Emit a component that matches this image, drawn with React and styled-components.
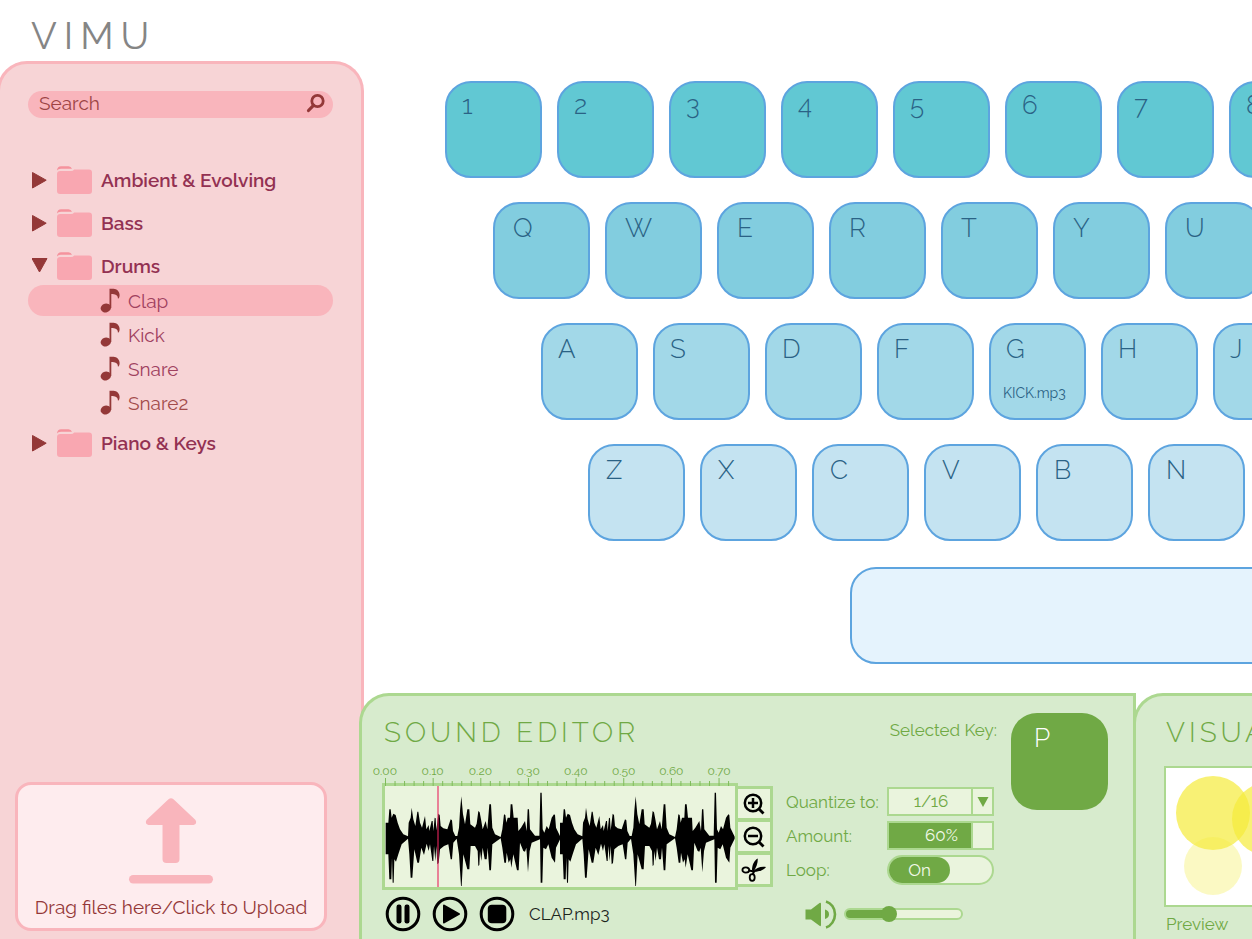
import React from 'react';
import styled, { createGlobalStyle, css } from 'styled-components';

const color = {
  pink: '#f7d4d6',
  pinkEdge: '#f9b5bc',
  maroon: '#943838',
  plum: '#933152',
  green: '#d7ebcd',
  greenEdge: '#acd890',
  leaf: '#70a945',
  cream: '#eaf4dd',
  keyEdge: '#5da4df',
  keyText: '#2a6285',
};

const GlobalStyle = createGlobalStyle`
  *, *::before, *::after { box-sizing: border-box; }
  body {
    margin: 0;
    background: #fff;
    font-family: Raleway, Lato, "Open Sans", sans-serif;
    font-size: 19px;
  }
  button, input, select { font: inherit; color: inherit; margin: 0; }
  ul { list-style: none; margin: 0; padding: 0; }
  svg { display: block; flex: none; }
`;

const Page = styled.div`
  min-height: 100vh;
  display: flex;
  flex-direction: column;
  overflow: hidden;
`;

const Logo = styled.h1`
  margin: 0;
  height: 61px;
  padding: 12px 0 0 31px;
  font-size: 38px;
  line-height: 48px;
  font-weight: 400;
  letter-spacing: 7px;
  color: #858585;
`;

const Body = styled.div`
  flex: 1;
  display: flex;
`;

const Sidebar = styled.aside`
  flex: none;
  width: 367px;
  margin-left: -3px;
  padding: 27px 28px 8px 28px;
  display: flex;
  flex-direction: column;
  background: ${color.pink};
  border: 3px solid ${color.pinkEdge};
  border-bottom: 0;
  border-radius: 30px 30px 0 0;
`;

const SearchBox = styled.label`
  width: 305px;
  height: 27px;
  padding: 0 8px 3px 11px;
  display: flex;
  align-items: center;
  background: ${color.pinkEdge};
  border-radius: 14px;
  color: ${color.maroon};
`;

const SearchInput = styled.input`
  flex: 1;
  min-width: 0;
  padding: 0;
  border: 0;
  outline: 0;
  background: none;
  line-height: 24px;
  &::placeholder { color: ${color.maroon}; opacity: 0.9; }
`;

const Tree = styled.ul`
  width: 305px;
  margin-top: 46px;
`;

const Branch = styled.li`
  margin-bottom: ${(p) => (p.$open ? 9 : 11)}px;
`;

const FolderButton = styled.button`
  height: 32px;
  width: 100%;
  padding: 0 0 0 4px;
  display: flex;
  align-items: center;
  gap: 9px;
  border: 0;
  background: none;
  color: ${color.plum};
  font-weight: 600;
  text-align: left;
`;

const Files = styled.ul`
  margin-top: 3px;
  display: flex;
  flex-direction: column;
  gap: 3px;
`;

const FileButton = styled.button`
  width: 100%;
  height: 31px;
  padding: 0 0 0 72px;
  display: flex;
  align-items: center;
  gap: 8px;
  border: 0;
  border-radius: 16px;
  background: ${(p) => (p.$selected ? color.pinkEdge : 'none')};
  color: ${(p) => (p.$tone === 'red' ? '#a34b4b' : '#a0415f')};
`;

const Upload = styled.label`
  width: 312px;
  height: 149px;
  margin: auto 0 0 -13px;
  padding-top: 12px;
  display: flex;
  flex-direction: column;
  align-items: center;
  justify-content: space-between;
  padding-bottom: 9px;
  background: #feecee;
  border: 3px solid ${color.pinkEdge};
  border-radius: 16px;
  color: ${color.maroon};
  line-height: 24px;
`;

const HiddenInput = styled.input`
  position: absolute;
  width: 1px;
  height: 1px;
  opacity: 0;
`;

const Workspace = styled.main`
  flex: 1;
  min-width: 0;
  display: flex;
  flex-direction: column;
`;

const Keyboard = styled.section`
  padding: 20px 0 29px 81px;
  display: flex;
  flex-direction: column;
  gap: 24px;
`;

const KeyRow = styled.div`
  display: flex;
  gap: 15px;
  margin-left: ${(p) => p.$indent}px;
`;

const keyShape = css`
  flex: none;
  width: 97px;
  height: 97px;
  border-radius: 26px;
  line-height: 30px;
  font-size: 26px;
  font-weight: 300;
`;

const Key = styled.button`
  ${keyShape}
  padding: ${(p) => p.$top}px 0 15px ${(p) => p.$inset}px;
  display: flex;
  flex-direction: column;
  justify-content: space-between;
  align-items: flex-start;
  border: 2px solid ${color.keyEdge};
  background: ${(p) => p.$fill};
  color: ${color.keyText};
`;

const KeySample = styled.span`
  margin-left: -3px;
  font-size: 14px;
  line-height: 20px;
  font-weight: 400;
`;

const SpaceKey = styled.button`
  flex: none;
  width: 560px;
  height: 97px;
  margin: 2px 0 0 405px;
  border: 2px solid ${color.keyEdge};
  border-radius: 26px;
  background: #e5f3fd;
`;

const Studio = styled.div`
  flex: 1;
  display: flex;
  margin-left: -5px;
`;

const panel = css`
  border: 3px solid ${color.greenEdge};
  border-bottom: 0;
  background: ${color.green};
  color: ${color.leaf};
`;

const Editor = styled.section`
  ${panel}
  flex: none;
  position: relative;
  z-index: 1;
  width: 777px;
  padding: 17px 25px 4px 20px;
  display: flex;
  border-radius: 30px 0 0 0;
`;

const PanelTitle = styled.h2`
  margin: 0;
  padding-left: 2px;
  font-size: 28px;
  line-height: 40px;
  font-weight: 300;
  letter-spacing: 4px;
  white-space: nowrap;
`;

const WaveColumn = styled.div`
  flex: none;
  width: 391px;
`;

const RulerLabels = styled.div`
  display: grid;
  grid-template-columns: repeat(8, 1fr);
  width: 382px;
  margin: 11px 0 0 -21px;
  font-size: 12px;
  line-height: 14px;
  text-align: center;
`;

const Ticks = styled.svg`
  position: relative;
  margin: 0 0 -3px 3px;
`;

const WaveRow = styled.div`
  display: flex;
  align-items: center;
`;

const WaveBox = styled.div`
  width: 356px;
  height: 107px;
  border: 3px solid ${color.greenEdge};
  background: ${color.cream};
`;

const Tools = styled.div`
  flex: 1;
  height: 101px;
  display: flex;
  flex-direction: column;
  gap: 4px;
  padding: 3px 3px 3px 0;
  background: ${color.greenEdge};
`;

const ToolButton = styled.button`
  flex: 1;
  padding: 0;
  display: grid;
  place-items: center;
  border: 0;
  background: ${color.cream};
  color: #000;
`;

const Transport = styled.div`
  margin-top: 6px;
  padding-left: 3px;
  display: flex;
  align-items: center;
  gap: 11px;
  color: #1c241c;
`;

const RoundButton = styled.button`
  width: 36px;
  height: 36px;
  padding: 0;
  border: 0;
  background: none;
`;

const TrackName = styled.span`
  margin-left: 3px;
  font-size: 17px;
`;

const Controls = styled.div`
  flex: none;
  width: 211px;
  margin: 0 14px 0 13px;
`;

const SelectedLabel = styled.div`
  margin-bottom: 40px;
  line-height: 34px;
  font-size: 17px;
  text-align: right;
`;

const Field = styled.div`
  display: grid;
  grid-template-columns: 101px 107px;
  height: 29px;
  margin-bottom: 5px;
  align-items: center;
  font-size: 17px;
`;

const Box = styled.div`
  position: relative;
  height: 29px;
  display: flex;
  border: 2px solid ${color.greenEdge};
  background: ${color.cream};
`;

const Quantize = styled.select`
  appearance: none;
  width: 100%;
  border: 0;
  outline: 0;
  padding: 0 19px 2px 0;
  background: none;
  text-align: center;
  text-align-last: center;
`;

const SelectArrow = styled.span`
  position: absolute;
  right: 0;
  top: 0;
  bottom: 0;
  width: 21px;
  display: grid;
  place-items: center;
  border-left: 2px solid ${color.greenEdge};
  pointer-events: none;
`;

const Amount = styled.input`
  appearance: none;
  width: 100%;
  height: 25px;
  background: linear-gradient(
    to right,
    ${color.leaf} 82px,
    ${color.greenEdge} 82px 84px,
    ${color.cream} 84px
  );
  &::-webkit-slider-thumb { appearance: none; width: 1px; height: 25px; }
`;

const AmountValue = styled.output`
  position: absolute;
  inset: 0;
  padding-left: 2px;
  line-height: 24px;
  text-align: center;
  color: #f2f9ea;
  pointer-events: none;
`;

const Toggle = styled.label`
  height: 30px;
  display: flex;
  border: 2px solid ${color.greenEdge};
  border-radius: 15px;
  background: ${color.cream};
`;

const ToggleKnob = styled.span`
  width: 61px;
  border-radius: 13px;
  background: ${color.leaf};
  color: #f2f9ea;
  line-height: 26px;
  text-align: center;
`;

const Volume = styled.label`
  margin-top: 15px;
  padding-left: 19px;
  height: 30px;
  display: flex;
  align-items: center;
  gap: 7px;
`;

const VolumeSlider = styled.input`
  appearance: none;
  width: 119px;
  height: 12px;
  border: 2px solid ${color.greenEdge};
  border-radius: 6px;
  background: linear-gradient(to right, ${color.leaf} 38%, ${color.cream} 38%);
  &::-webkit-slider-thumb {
    appearance: none;
    width: 16px;
    height: 16px;
    border-radius: 8px;
    background: ${color.leaf};
  }
`;

const SelectedKey = styled.button`
  ${keyShape}
  padding: 10px 0 0 23px;
  display: flex;
  align-items: flex-start;
  border: 0;
  background: ${color.leaf};
  color: #fff;
`;

const Visualizer = styled.section`
  ${panel}
  flex: 1 0 420px;
  margin-left: -3px;
  padding: 17px 28px 0 28px;
  border-radius: 30px 0 0 0;
`;

const Preview = styled.figure`
  margin: 13px 0 0;
`;

const Screen = styled.div`
  height: 141px;
  border: 2px solid ${color.greenEdge};
  background: #fff;
`;

const Caption = styled.figcaption`
  padding: 5px 0 0 2px;
  line-height: 24px;
  font-size: 17px;
`;

function Arrow({ open }) {
  return (
    <svg width="16" height="18" viewBox="0 0 16 18" fill={color.maroon} stroke={color.maroon} strokeWidth="1" strokeLinejoin="round">
      {open ? <path d="M0 1.500h15L7.500 15Z" /> : <path d="M.5 1.500v15.500L14.200 9.200Z" />}
    </svg>
  );
}

function FolderIcon() {
  return (
    <svg width="35" height="29" viewBox="0 0 35 29">
      <path d="M0 4.500Q.5.300 4 .3h7.500Q14 .3 15 2.800H4Q1 2.800 0 4.500Z" fill="#f5929d" />
      <path d="M3.500 5H14q2 0 3.200-1.600H32q3 0 3 3V25q0 3-3 3H3q-3 0-3-3V8q0-3 3.500-3Z" fill="#f9a7b1" />
    </svg>
  );
}

function NoteIcon() {
  return (
    <svg width="20" height="25" viewBox="0 0 20 25" fill={color.maroon}>
      <ellipse cx="5.800" cy="20" rx="5.200" ry="4.400" transform="rotate(-15 5.800 20)" />
      <path d="M9.500 20V.8h1.600C15 .5 18.500 1.500 19.500 6c.3 2-.2 3.500-1 4.500h-.6C18 7 15 6.200 11.300 6V20Z" />
    </svg>
  );
}

function UploadIcon() {
  return (
    <svg width="86" height="90" viewBox="0 0 86 90" fill={color.pinkEdge}>
      <path d="M40.500 2.300q2.500-2 5 0L67.500 23q2 4-2 5H51.500V62q0 4-4 4h-9q-4 0-4-4V28H20.500q-4-1-2-5Z" />
      <rect x="1" y="78" width="84" height="8.500" rx="4.200" />
    </svg>
  );
}

// One pass of the loop as [x, amplitude] pairs, in thirds of a pixel.
const upper = [
  [0, 45], [8, 45], [11, 85], [15, 85], [18, 60], [23, 72], [30, 68], [36, 45], [43, 25], [53, 10], [67, 4],
  [69, 45], [75, 60], [78, 90], [83, 55], [89, 35], [95, 78], [98, 78], [103, 45], [109, 30], [118, 65], [122, 25],
  [129, 38], [131, 20], [138, 50], [141, 50], [143, 20], [147, 60], [150, 58], [152, 22], [158, 72], [162, 68], [165, 35], [173, 28],
  [185, 25], [195, 55], [199, 52], [202, 20], [209, 5], [215, 5], [220, 30], [223, 80], [227, 124], [232, 70],
  [238, 40], [245, 85], [251, 85], [254, 40], [268, 30], [273, 42], [278, 80], [282, 76], [286, 55], [291, 25], [300, 50],
  [305, 25], [311, 100], [316, 100], [320, 30], [328, 10], [345, 2], [350, 25], [355, 70], [359, 68], [362, 45], [366, 60],
  [373, 60], [375, 100], [380, 100], [384, 60], [396, 60], [398, 20], [406, 30], [418, 50], [423, 20],
  [426, 85], [430, 85], [433, 25], [448, 6], [461, 6], [464, 135], [468, 135], [471, 25], [476, 15], [483, 35], [489, 25],
  [498, 60], [505, 70], [508, 68], [511, 30], [524, 3],
];
const lower = [
  [0, 50], [8, 50], [11, 125], [17, 125], [19, 60], [21, 135], [24, 135], [26, 65], [31, 72], [38, 50], [48, 20],
  [67, 3], [71, 50], [75, 120], [80, 120], [86, 35], [95, 75], [100, 75], [107, 30], [115, 52], [123, 18],
  [129, 40], [133, 20], [140, 70], [143, 70], [145, 25], [149, 70], [152, 25], [155, 80], [159, 76], [163, 35], [175, 25],
  [188, 20], [195, 65], [199, 65], [203, 15], [213, 3], [220, 50], [226, 145], [228, 145], [233, 50], [245, 95],
  [251, 95], [255, 25], [268, 25], [276, 40], [278, 85], [281, 82], [283, 40], [287, 70], [291, 30], [297, 65], [303, 65],
  [306, 30], [311, 98], [316, 98], [320, 20], [345, 2], [350, 30], [356, 75], [361, 75], [363, 45], [369, 75],
  [374, 65], [377, 90], [383, 50], [394, 98], [399, 98], [403, 15], [413, 40], [418, 42], [422, 30], [427, 104], [432, 40],
  [438, 15], [463, 5], [465, 135], [470, 135], [473, 30], [481, 35], [488, 20], [498, 60], [508, 75], [511, 30], [524, 3],
];
const wavePath =
  'M' + upper.map(([x, a]) => `${x} ${-a}`).join('L') + 'L' + [...lower].reverse().map(([x, a]) => `${x} ${a}`).join('L') + 'Z';

function Waveform() {
  return (
    <svg width="350" height="101" viewBox="0 0 1050 303" role="img" aria-label="Waveform">
      <path d={wavePath} transform="translate(2 155)" />
      <path d={wavePath} transform="translate(525 155)" />
      <rect x="156" y="0" width="6" height="303" fill="#e8245c" opacity="0.55" />
    </svg>
  );
}

function RulerTicks() {
  const ticks = Array.from({ length: 37 }, (_, i) => i);
  return (
    <Ticks width="352" height="8" viewBox="0 0 352 8" fill="#7fbb5a">
      {ticks.map((i) => (
        <rect key={i} x={i * 9.53} y={i % 5 ? 3 : 0} width="1" height={i % 5 ? 5 : 8} />
      ))}
    </Ticks>
  );
}

function SearchIcon() {
  return (
    <svg width="20" height="20" viewBox="0 0 20 20" fill="none" stroke={color.maroon}>
      <circle cx="12.500" cy="8" r="5.700" strokeWidth="2.800" />
      <path d="M8.500 12.300 3.500 17.500" strokeWidth="3.200" strokeLinecap="round" />
    </svg>
  );
}

function ZoomIcon({ plus }) {
  return (
    <svg width="24" height="24" viewBox="0 0 24 24" fill="none" stroke="#000" strokeWidth="2.500">
      <circle cx="11" cy="11" r="8.200" />
      <path d="M6 11h10" />
      {plus && <path d="M11 6v10" />}
      <path d="m17 17 4.500 4.500" strokeWidth="2.800" />
    </svg>
  );
}

function ScissorsIcon() {
  return (
    <svg width="26" height="26" viewBox="0 0 26 26">
      <path d="M11 13C11 8 13 3.500 16.800 1.500 17 6 15 11 12.500 15Z" />
      <path d="M12 14.500C15 11 20 9 25 10 22.500 13.500 17.500 14.500 12.500 15Z" />
      <path d="M8 13.500 13 14.500 11.500 18" fill="none" stroke="#000" strokeWidth="2" />
      <ellipse cx="4.800" cy="13" rx="3.400" ry="2.600" fill="none" stroke="#000" strokeWidth="1.800" />
      <ellipse cx="11.200" cy="20.500" rx="2.500" ry="3.300" fill="none" stroke="#000" strokeWidth="1.800" />
    </svg>
  );
}

function TransportIcon({ kind }) {
  return (
    <svg width="36" height="36" viewBox="0 0 36 36">
      <circle cx="18" cy="18" r="15.800" fill="none" stroke="#000" strokeWidth="3" />
      {kind === 'Pause' && (
        <>
          <rect x="11.500" y="8.500" width="5" height="19" rx="2.200" />
          <rect x="19.500" y="8.500" width="5" height="19" rx="2.200" />
        </>
      )}
      {kind === 'Play' && <path d="M12 9.500 27 18 12 26.500Z" stroke="#000" strokeWidth="2" strokeLinejoin="round" />}
      {kind === 'Stop' && <rect x="8.800" y="8.800" width="18.500" height="18.500" rx="4" />}
    </svg>
  );
}

function SpeakerIcon() {
  return (
    <svg width="32" height="30" viewBox="0 0 32 30" fill={color.leaf}>
      <path d="M.5 10.500H6L14.500 4q1.500-.8 1.500 1V26q0 1.800-1.500.8L6 20.500H.5Z" />
      <path d="M20 10.500q4 1 4 4.700t-4 4.700Z" />
      <path d="M22 2.500C27 4 31 9 31 15.200S27 27 22 28.500" fill="none" stroke={color.leaf} strokeWidth="2.600" transform="translate(-1 0)" />
    </svg>
  );
}

const folders = [
  { name: 'Ambient & Evolving' },
  { name: 'Bass' },
  {
    name: 'Drums',
    files: [{ name: 'Clap', selected: true }, { name: 'Kick' }, { name: 'Snare' }, { name: 'Snare2', tone: 'red' }],
  },
  { name: 'Piano & Keys' },
];

const keyRows = [
  { keys: '12345678', indent: 0, inset: 15, top: 7, fill: '#61c8d3' },
  { keys: 'QWERTYU', indent: 48, inset: 18, top: 9, fill: '#82cddf' },
  { keys: 'ASDFGHJ', indent: 96, inset: 15, top: 9, fill: '#a2d8e8' },
  { keys: 'ZXCVBN', indent: 143, inset: 16, top: 9, fill: '#c4e3f1' },
];

const samples = { G: 'KICK.mp3' };
const marks = ['0.00', '0.10', '0.20', '0.30', '0.40', '0.50', '0.60', '0.70'];

export default function App() {
  return (
    <Page>
      <GlobalStyle />
      <Logo>VIMU</Logo>
      <Body>
        <Sidebar>
          <SearchBox>
            <SearchInput type="text" placeholder="Search" aria-label="Search" />
            <SearchIcon />
          </SearchBox>
          <Tree>
            {folders.map((f) => (
              <Branch key={f.name} $open={!!f.files}>
                <FolderButton type="button" aria-expanded={!!f.files}>
                  <Arrow open={!!f.files} />
                  <FolderIcon />
                  {f.name}
                </FolderButton>
                {f.files && (
                  <Files>
                    {f.files.map((s) => (
                      <li key={s.name}>
                        <FileButton type="button" $selected={s.selected} $tone={s.tone}>
                          <NoteIcon />
                          {s.name}
                        </FileButton>
                      </li>
                    ))}
                  </Files>
                )}
              </Branch>
            ))}
          </Tree>
          <Upload>
            <HiddenInput type="file" />
            <UploadIcon />
            Drag files here/Click to Upload
          </Upload>
        </Sidebar>
        <Workspace>
          <Keyboard>
            {keyRows.map((row) => (
              <KeyRow key={row.keys} $indent={row.indent}>
                {[...row.keys].map((k) => (
                  <Key key={k} type="button" $fill={row.fill} $inset={row.inset} $top={row.top}>
                    {k}
                    {samples[k] && <KeySample>{samples[k]}</KeySample>}
                  </Key>
                ))}
              </KeyRow>
            ))}
            <SpaceKey type="button" aria-label="Space" />
          </Keyboard>
          <Studio>
            <Editor>
              <WaveColumn>
                <PanelTitle>SOUND EDITOR</PanelTitle>
                <RulerLabels>
                  {marks.map((m) => (
                    <span key={m}>{m}</span>
                  ))}
                </RulerLabels>
                <RulerTicks />
                <WaveRow>
                  <WaveBox>
                    <Waveform />
                  </WaveBox>
                  <Tools>
                    <ToolButton type="button" aria-label="Zoom in"><ZoomIcon plus /></ToolButton>
                    <ToolButton type="button" aria-label="Zoom out"><ZoomIcon /></ToolButton>
                    <ToolButton type="button" aria-label="Cut"><ScissorsIcon /></ToolButton>
                  </Tools>
                </WaveRow>
                <Transport>
                  {['Pause', 'Play', 'Stop'].map((kind) => (
                    <RoundButton key={kind} type="button" aria-label={kind}>
                      <TransportIcon kind={kind} />
                    </RoundButton>
                  ))}
                  <TrackName>CLAP.mp3</TrackName>
                </Transport>
              </WaveColumn>
              <Controls>
                <SelectedLabel>Selected Key:</SelectedLabel>
                <Field>
                  <label htmlFor="quantize">Quantize to:</label>
                  <Box>
                    <Quantize id="quantize" defaultValue="1/16">
                      <option>1/16</option>
                    </Quantize>
                    <SelectArrow>
                      <svg width="12" height="10" viewBox="0 0 12 10" fill={color.leaf}>
                        <path d="M.5 0h11L6 10Z" />
                      </svg>
                    </SelectArrow>
                  </Box>
                </Field>
                <Field>
                  <label htmlFor="amount">Amount:</label>
                  <Box>
                    <Amount id="amount" type="range" defaultValue="60" />
                    <AmountValue htmlFor="amount">60%</AmountValue>
                  </Box>
                </Field>
                <Field>
                  <label htmlFor="loop">Loop:</label>
                  <Toggle>
                    <HiddenInput id="loop" type="checkbox" defaultChecked />
                    <ToggleKnob>On</ToggleKnob>
                  </Toggle>
                </Field>
                <Volume>
                  <SpeakerIcon />
                  <VolumeSlider type="range" defaultValue="35" aria-label="Volume" />
                </Volume>
              </Controls>
              <SelectedKey type="button">P</SelectedKey>
            </Editor>
            <Visualizer>
              <PanelTitle>VISUALIZER</PanelTitle>
              <Preview>
                <Screen>
                  <svg width="240" height="137" viewBox="0 0 240 137">
                    <circle cx="47" cy="98" r="29" fill="#f5ee5a" opacity="0.36" />
                    <circle cx="47" cy="45" r="37" fill="#f5eb3a" opacity="0.7" />
                    <circle cx="103" cy="51" r="37" fill="#f5eb3a" opacity="0.7" />
                  </svg>
                </Screen>
                <Caption>Preview</Caption>
              </Preview>
            </Visualizer>
          </Studio>
        </Workspace>
      </Body>
    </Page>
  );
}
